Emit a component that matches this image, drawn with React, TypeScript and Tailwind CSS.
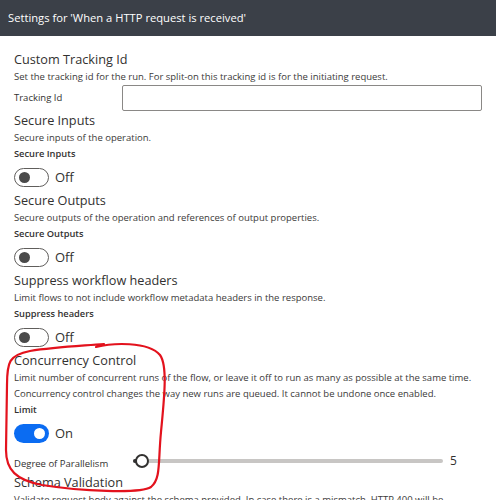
import React from 'react';

const font = { fontFamily: '"Open Sans", "Noto Sans", sans-serif' };

function Toggle({ on, label }: { on: boolean; label: string }) {
  return (
    <div className="mt-[5px] flex h-[20px] items-center gap-[6px]">
      {on ? (
        <div className="flex h-[19px] w-[35px] items-center justify-end rounded-full bg-[#0b6cf2] pr-[4px]">
          <div className="h-[11px] w-[11px] rounded-full bg-white" />
        </div>
      ) : (
        <div className="flex h-[19px] w-[35px] items-center rounded-full border border-[#605e5c] bg-white pl-[4px]">
          <div className="h-[11px] w-[11px] rounded-full bg-[#4a4a4a]" />
        </div>
      )}
      <span className="text-[13px] leading-[20px] text-[#323130]">{label}</span>
    </div>
  );
}

function Title({ children }: { children: React.ReactNode }) {
  return <div className="h-[19px] text-[12.7px] leading-[19px] text-[#323130]">{children}</div>;
}

function Desc({ children }: { children: React.ReactNode }) {
  return <div className="h-[16px] whitespace-nowrap text-[9.5px] leading-[16px] text-[#3b3a39]">{children}</div>;
}

function Label({ children }: { children: React.ReactNode }) {
  return <div className="h-[16px] text-[9.3px] font-semibold leading-[16px] text-[#323130]">{children}</div>;
}

function Section({
  title,
  desc,
  label,
  on,
}: {
  title: string;
  desc: string[];
  label: string;
  on: boolean;
}) {
  return (
    <div className="mb-[4px]">
      <Title>{title}</Title>
      {desc.map((d) => (
        <Desc key={d}>{d}</Desc>
      ))}
      <Label>{label}</Label>
      <Toggle on={on} label={on ? 'On' : 'Off'} />
    </div>
  );
}

export default function App() {
  return (
    <div className="relative h-[500px] w-[496px] overflow-hidden bg-white" style={font}>
      <div className="flex h-[36px] items-center bg-[#3b4048] pl-[8px] text-[11.2px] text-white">
        Settings for 'When a HTTP request is received'
      </div>

      <div className="px-[14px] pt-[14px]">
        <Title>Custom Tracking Id</Title>
        <Desc>Set the tracking id for the run. For split-on this tracking id is for the initiating request.</Desc>
        <div className="flex h-[26px] items-center">
          <span className="w-[108px] text-[9.5px] text-[#323130]">Tracking Id</span>
          <div className="h-[26px] w-[361px] rounded-[2px] border border-[#8a8886] bg-white" />
        </div>

        <Section title="Secure Inputs" desc={['Secure inputs of the operation.']} label="Secure Inputs" on={false} />
        <Section
          title="Secure Outputs"
          desc={['Secure outputs of the operation and references of output properties.']}
          label="Secure Outputs"
          on={false}
        />
        <Section
          title="Suppress workflow headers"
          desc={['Limit flows to not include workflow metadata headers in the response.']}
          label="Suppress headers"
          on={false}
        />

        <Title>Concurrency Control</Title>
        <Desc>Limit number of concurrent runs of the flow, or leave it off to run as many as possible at the same time.</Desc>
        <Desc>Concurrency control changes the way new runs are queued. It cannot be undone once enabled.</Desc>
        <Label>Limit</Label>
        <Toggle on label="On" />

        <div className="mt-[6px] flex h-[24px] items-center">
          <span className="w-[119px] pt-[6px] text-[9.5px] text-[#323130]">Degree of Parallelism</span>
          <div className="relative flex h-[14px] w-[310px] items-center">
            <div className="h-[4px] w-full rounded-full bg-[#c8c6c4]" />
            <div className="absolute left-0 h-[4px] w-[9px] rounded-l-full bg-[#323130]" />
            <div className="absolute left-[2px] h-[14px] w-[14px] rounded-full border-2 border-[#323130] bg-white" />
          </div>
          <span className="ml-[7px] text-[12px] text-[#323130]">5</span>
        </div>

        <Title>Schema Validation</Title>
        <Desc>Validate request body against the schema provided. In case there is a mismatch, HTTP 400 will be</Desc>
      </div>

      <svg className="pointer-events-none absolute left-0 top-0" width="496" height="500" viewBox="0 0 496 500">
        <path
          d="M96 347 C 112 343, 148 341, 160 355 C 168 366, 164 400, 161 432 C 158 462, 161 479, 151 487 C 140 494, 80 491, 42 485 C 16 480, 6 470, 6 450 L 7 385 C 7 362, 9 355, 30 351 C 55 347, 80 346, 104 344"
          fill="none"
          stroke="#e3121d"
          strokeWidth="2.2"
          strokeLinecap="round"
        />
      </svg>
    </div>
  );
}
